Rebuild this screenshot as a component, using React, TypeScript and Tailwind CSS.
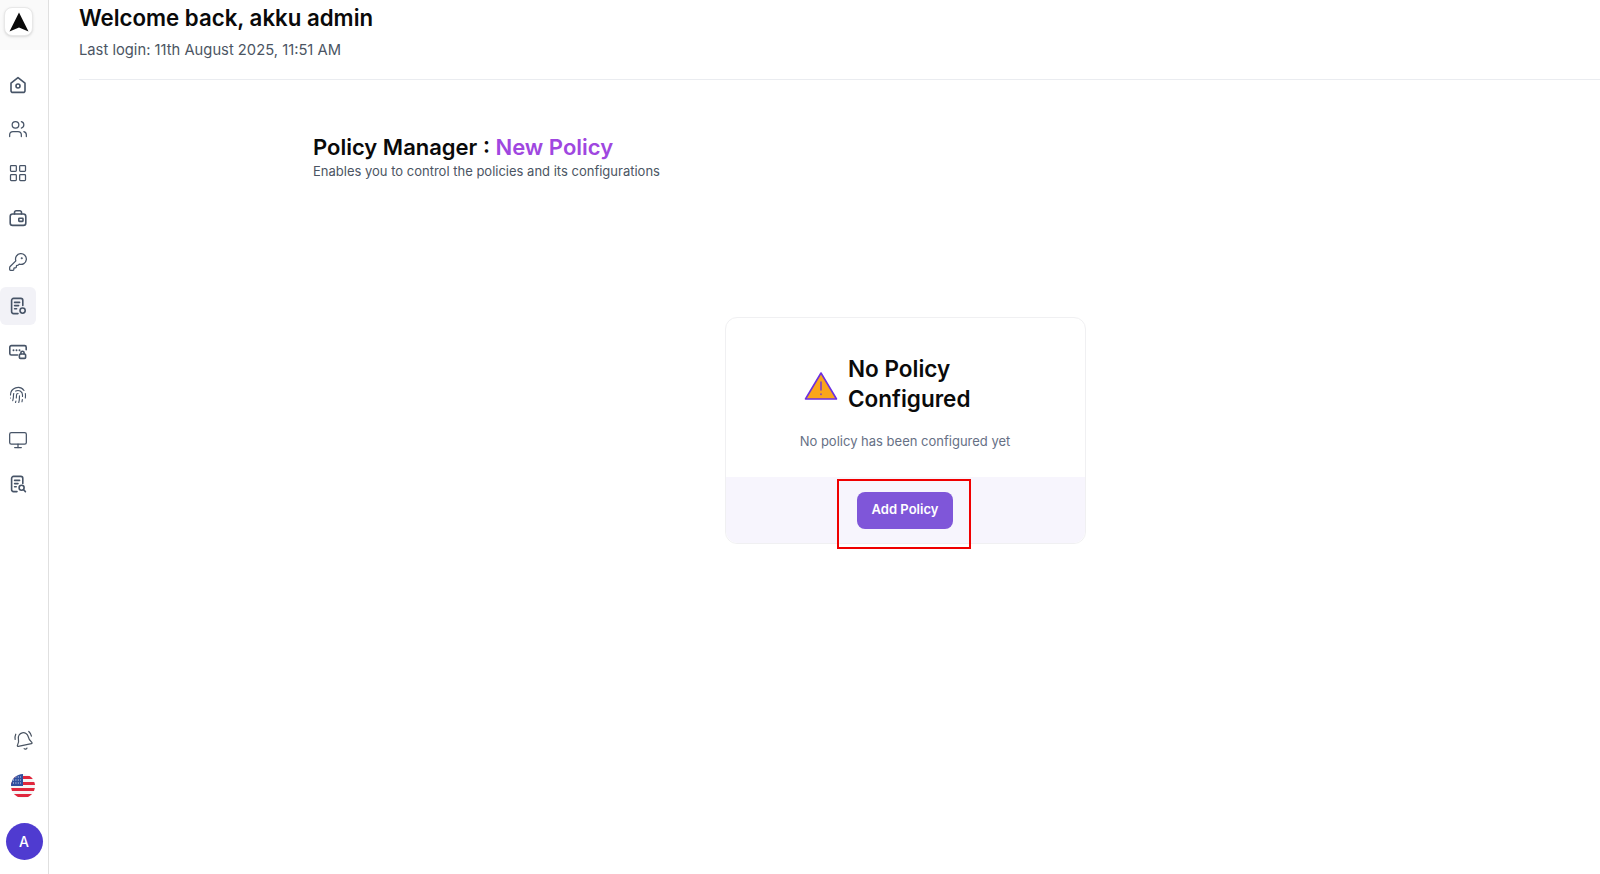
import { Users, LayoutGrid, KeyRound, Fingerprint, Monitor, BellRing } from 'lucide-react';
import type { ReactNode } from 'react';

const stroke = {
  fill: 'none',
  stroke: 'currentColor',
  strokeWidth: 1.6,
  strokeLinecap: 'round' as const,
  strokeLinejoin: 'round' as const,
};

function Svg({ children }: { children: ReactNode }) {
  return (
    <svg width="20" height="20" viewBox="0 0 20 20" {...stroke}>
      {children}
    </svg>
  );
}

const HomeIcon = () => (
  <Svg>
    <path d="M3 8.2 10 2.6l7 5.6v7.2a2 2 0 0 1-2 2H5a2 2 0 0 1-2-2Z" />
    <circle cx="10" cy="11" r="2" />
  </Svg>
);

const WalletIcon = () => (
  <Svg>
    <rect x="2.2" y="6" width="15.6" height="11.4" rx="2.4" />
    <path d="M6.5 6V4.4a1.6 1.6 0 0 1 1.6-1.6h3.8a1.6 1.6 0 0 1 1.6 1.6V6" />
    <rect x="10.8" y="10.2" width="4.2" height="3.2" rx="0.6" />
  </Svg>
);

const PolicyIcon = () => (
  <Svg>
    <path d="M10 17.6H5.6a2 2 0 0 1-2-2V4.4a2 2 0 0 1 2-2h7.2a2 2 0 0 1 2 2v5" />
    <path d="M6.6 6.4h5M6.6 9.6h4M6.6 12.8h2" />
    <circle cx="14.6" cy="14.6" r="2.6" />
  </Svg>
);

const PasswordIcon = () => (
  <Svg>
    <path d="M9.5 14H3.4a1.6 1.6 0 0 1-1.6-1.6V6.2a1.6 1.6 0 0 1 1.6-1.6h13.2a1.6 1.6 0 0 1 1.6 1.6v2.6" />
    <path d="M5.5 9.3h.01M8.5 9.3h.01M11.5 9.3h.01" strokeWidth="2" />
    <rect x="11.4" y="13" width="6.2" height="4.4" rx="1" />
    <path d="M12.9 13v-1.2a1.6 1.6 0 0 1 3.2 0V13" />
  </Svg>
);

const AuditIcon = () => (
  <Svg>
    <path d="M9 17.6H5.6a2 2 0 0 1-2-2V4.4a2 2 0 0 1 2-2h7.2a2 2 0 0 1 2 2v5" />
    <path d="M6.6 6.4h5M6.6 9.6h3.4M6.6 12.8h1.6" />
    <circle cx="13.6" cy="13.8" r="2.5" />
    <path d="m15.6 15.8 1.8 1.8" />
  </Svg>
);

const navItems: { icon: ReactNode; active?: boolean }[] = [
  { icon: <HomeIcon /> },
  { icon: <Users size={20} strokeWidth={1.5} /> },
  { icon: <LayoutGrid size={20} strokeWidth={1.5} /> },
  { icon: <WalletIcon /> },
  { icon: <KeyRound size={20} strokeWidth={1.5} /> },
  { icon: <PolicyIcon />, active: true },
  { icon: <PasswordIcon /> },
  { icon: <Fingerprint size={18} strokeWidth={1.5} /> },
  { icon: <Monitor size={20} strokeWidth={1.5} /> },
  { icon: <AuditIcon /> },
];

function UsFlag() {
  return (
    <svg width="24" height="24" viewBox="0 0 24 24">
      <defs>
        <clipPath id="flag-clip">
          <circle cx="12" cy="12" r="12" />
        </clipPath>
      </defs>
      <g clipPath="url(#flag-clip)">
        <rect width="24" height="24" fill="#f5f5f5" />
        <rect y="2" width="24" height="3" fill="#e0273d" />
        <rect y="8" width="24" height="3" fill="#e0273d" />
        <rect y="14" width="24" height="3" fill="#e0273d" />
        <rect y="20" width="24" height="3" fill="#e0273d" />
        <rect width="12" height="12" fill="#2f4f9f" />
        <path d="M2 3h8M2 6h8M2 9h8" stroke="#dfe6f5" strokeWidth="1" strokeDasharray="1 1.4" />
      </g>
    </svg>
  );
}

export default function App() {
  return (
    <div className="flex min-h-screen bg-white font-['Inter',sans-serif]">
      <aside className="flex h-[874px] w-[49px] shrink-0 flex-col border-r border-[#e0e0e0]">
        <div className="h-[50px] bg-[#fafafa] pl-1 pt-[7px]">
          <div className="flex h-[29px] w-[29px] items-center justify-center rounded-lg border border-[#e8e8e8] bg-white shadow-sm">
            <svg width="20" height="20" viewBox="0 0 20 20">
              <path d="M10 0.5 19.5 19.5 10 15.5 0.5 19.5Z" fill="#0a0a0a" />
            </svg>
          </div>
        </div>
        <nav className="mt-[15.5px] flex flex-col gap-[6.4px]">
          {navItems.map((item, i) => (
            <div
              key={i}
              className={
                'flex h-[38px] w-9 items-center justify-center rounded-md text-[#475467] ' +
                (item.active ? 'bg-[#f2f2f7]' : '')
              }
            >
              {item.icon}
            </div>
          ))}
        </nav>
        <div className="mt-auto flex flex-col items-start pb-[14px]">
          <div className="ml-[14px] -rotate-12 text-[#4b5563]">
            <BellRing size={20} strokeWidth={1.5} />
          </div>
          <div className="ml-[11px] mt-[23px]">
            <UsFlag />
          </div>
          <div className="ml-[5.5px] mt-[25px] flex h-[37px] w-[37px] items-center justify-center rounded-full bg-[#4f3bd0] text-sm font-medium text-white">
            A
          </div>
        </div>
      </aside>

      <main className="flex-1 pl-[30px]">
        <header className="h-[80px] border-b border-[#eaecf0] pt-[4px]">
          <h1 className="text-[22.25px] font-semibold leading-[28px] text-[#0a0a0a]">Welcome back, akku admin</h1>
          <p className="mt-[7px] text-[14.75px] leading-[22px] text-[#4b5563]">Last login: 11th August 2025, 11:51 AM</p>
        </header>

        <section className="pl-[234px] pt-[53px]">
          <h2 className="text-[22px] font-semibold leading-[28px] text-[#0a0a0a]">
            Policy Manager : <span className="text-[#9f47e0]">New Policy</span>
          </h2>
          <p className="text-[13px] leading-[20px] text-[#4b5563]">Enables you to control the policies and its configurations</p>
        </section>

        <div className="ml-[645.5px] mt-[136px] w-[361px] rounded-xl border border-[#f0f0f2] bg-white">
          <div className="flex h-[159px] flex-col items-center pt-[36px]">
            <div className="flex items-center gap-[10px]">
              <svg className="mt-[3px]" width="34" height="30" viewBox="0 0 34 30">
                <path d="M17 2 32.5 28H1.5Z" fill="#faa61a" stroke="#6d2fe0" strokeWidth="1.6" strokeLinejoin="round" />
                <path d="M17 11v8M17 23v.5" stroke="#6d2fe0" strokeWidth="1.4" strokeLinecap="round" />
              </svg>
              <h3 className="w-[158px] text-[22.5px] font-semibold leading-[30px] text-[#0a0a0a]">No Policy Configured</h3>
            </div>
            <p className="mt-[17px] text-[13px] leading-[20px] text-[#667085]">No policy has been configured yet</p>
          </div>
          <div className="relative flex h-[66px] items-center justify-center rounded-b-xl bg-[#f7f5fd]">
            <button className="h-[37px] w-[96px] rounded-lg bg-[#7f56d9] text-[13px] font-semibold text-white">Add Policy</button>
            <div className="absolute left-[111px] top-[2px] h-[70px] w-[134px] border-2 border-[#f00000]" />
          </div>
        </div>
      </main>
    </div>
  );
}
